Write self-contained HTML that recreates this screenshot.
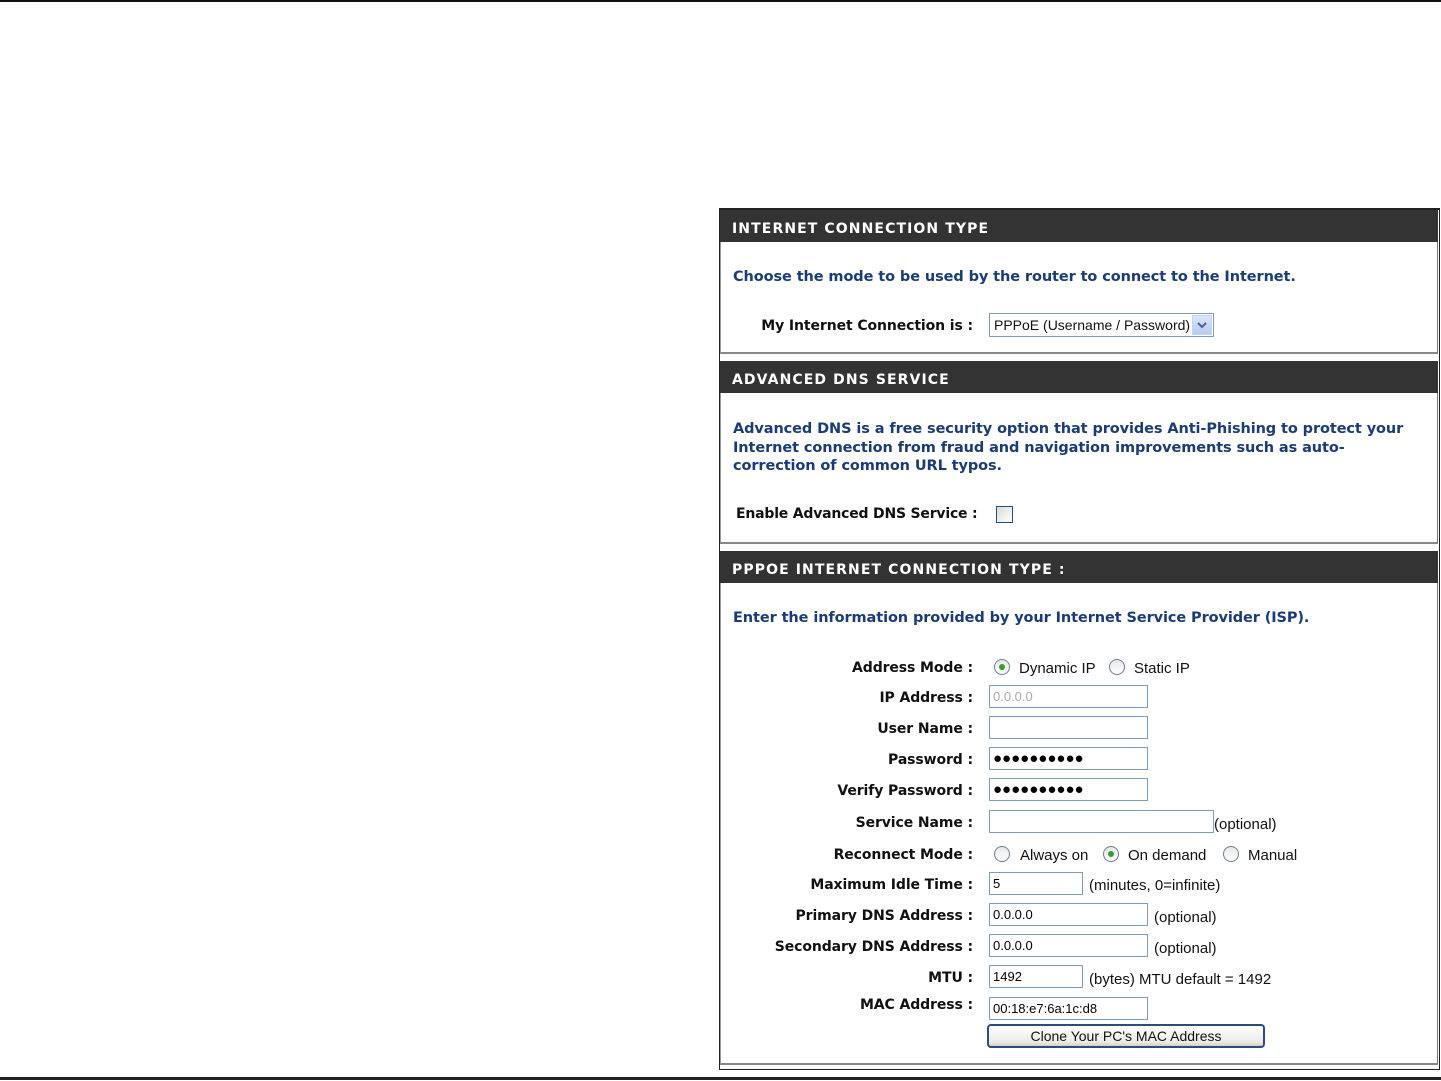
<!DOCTYPE html>
<html><head><meta charset="utf-8"><style>
*{margin:0;padding:0;box-sizing:border-box}
body{width:1441px;height:1081px;background:#fff;position:relative;overflow:hidden;font-family:"DejaVu Sans",Verdana,sans-serif}
.a{position:absolute;white-space:nowrap}
.hd{position:absolute;left:720px;width:718px;height:32px;background:#333;color:#fff;font-weight:bold;font-size:14px;letter-spacing:1.1px;padding-left:12px;padding-top:3px;line-height:32px}
.box{position:absolute;left:720px;width:718px;border-left:1px solid #999;border-right:1px solid #777;border-bottom:2px solid #888}
.blue{color:#1b3c78;font-weight:bold;font-size:14.5px;letter-spacing:-0.1px}
.lbl{position:absolute;right:468px;font-weight:bold;font-size:14px;color:#111;white-space:nowrap;letter-spacing:-0.1px}
.in{position:absolute;left:989px;width:159px;height:23px;border:1px solid #7f9db9;background:#fff;font-family:"Liberation Sans",Tahoma,sans-serif;font-size:13px;padding-left:3px;line-height:21px;color:#000}
.t{position:absolute;font-family:"Liberation Sans",Tahoma,sans-serif;font-size:15px;color:#111;white-space:nowrap}
.r{position:absolute;width:16px;height:16px;border-radius:50%;border:1px solid #6b7f95;background:linear-gradient(#e8e8e8,#fff)}
.r.on::after{content:"";position:absolute;left:4px;top:4px;width:6px;height:6px;border-radius:50%;background:#30a030}
.dots{font-size:15px;letter-spacing:0px;font-weight:bold;line-height:22px}
</style></head><body>
<div class="a" style="left:0;top:0;width:1441px;height:2px;background:#111"></div>
<div class="a" style="left:0;top:1077px;width:1441px;height:3px;background:#222"></div>

<div class="a" style="left:719px;top:208px;width:721px;height:862px;border:1px solid #222;border-top:2px solid #222"></div>

<!-- section 1 -->
<div class="hd" style="top:210px">INTERNET CONNECTION TYPE</div>
<div class="box" style="top:242px;height:112px"></div>
<div class="a blue" style="left:733px;top:269px">Choose the mode to be used by the router to connect to the Internet.</div>
<div class="lbl" style="top:318px">My Internet Connection is :</div>
<div class="a" style="left:989px;top:313px;width:225px;height:24px;border:1px solid #7f9db9;background:#fff"></div>
<div class="t" style="left:994px;top:317px;font-size:14px">PPPoE (Username / Password)</div>
<div class="a" style="left:1192px;top:315px;width:20px;height:20px;background:linear-gradient(#dbe6fb,#b6caf2);border:1px solid #c3d3f3"><svg width="18" height="18" viewBox="0 0 18 18"><path d="M5 7l4 4 4-4" stroke="#4d6185" stroke-width="2" fill="none"/></svg></div>

<!-- section 2 -->
<div class="hd" style="top:361px">ADVANCED DNS SERVICE</div>
<div class="box" style="top:393px;height:151px"></div>
<div class="a blue" style="left:733px;top:420px;line-height:18.5px;white-space:normal;width:690px">Advanced DNS is a free security option that provides Anti-Phishing to protect your Internet connection from fraud and navigation improvements such as auto-<br>correction of common URL typos.</div>
<div class="a" style="left:736px;top:506px;font-size:14px;color:#111;font-weight:600;letter-spacing:-0.2px">Enable Advanced DNS Service :</div>
<div class="a" style="left:996px;top:506px;width:17px;height:17px;border:1px solid #1c4f82;background:linear-gradient(135deg,#dcdcd5,#fff)"></div>

<!-- section 3 -->
<div class="hd" style="top:551px">PPPOE INTERNET CONNECTION TYPE :</div>
<div class="box" style="top:583px;height:482px"></div>
<div class="a blue" style="left:733px;top:610px">Enter the information provided by your Internet Service Provider (ISP).</div>

<div class="lbl" style="top:660px">Address Mode :</div>
<div class="r on" style="left:994px;top:659px"></div><div class="t" style="left:1019px;top:660px">Dynamic IP</div>
<div class="r" style="left:1109px;top:659px"></div><div class="t" style="left:1134px;top:660px">Static IP</div>

<div class="lbl" style="top:690px">IP Address :</div>
<div class="in" style="top:685px;color:#aaa">0.0.0.0</div>
<div class="lbl" style="top:721px">User Name :</div>
<div class="in" style="top:716px"></div>
<div class="lbl" style="top:752px">Password :</div>
<div class="in dots" style="top:747px">●●●●●●●●●●</div>
<div class="lbl" style="top:783px">Verify Password :</div>
<div class="in dots" style="top:778px">●●●●●●●●●●</div>
<div class="lbl" style="top:815px">Service Name :</div>
<div class="in" style="top:810px;width:225px"></div><div class="t" style="left:1214px;top:816px">(optional)</div>

<div class="lbl" style="top:847px">Reconnect Mode :</div>
<div class="r" style="left:994px;top:846px"></div><div class="t" style="left:1020px;top:847px">Always on</div>
<div class="r on" style="left:1103px;top:846px"></div><div class="t" style="left:1128px;top:847px">On demand</div>
<div class="r" style="left:1223px;top:846px"></div><div class="t" style="left:1248px;top:847px">Manual</div>

<div class="lbl" style="top:877px">Maximum Idle Time :</div>
<div class="in" style="top:872px;width:94px">5</div><div class="t" style="left:1089px;top:877px">(minutes, 0=infinite)</div>
<div class="lbl" style="top:908px">Primary DNS Address :</div>
<div class="in" style="top:903px">0.0.0.0</div><div class="t" style="left:1154px;top:909px">(optional)</div>
<div class="lbl" style="top:939px">Secondary DNS Address :</div>
<div class="in" style="top:934px">0.0.0.0</div><div class="t" style="left:1154px;top:940px">(optional)</div>
<div class="lbl" style="top:970px">MTU :</div>
<div class="in" style="top:965px;width:94px">1492</div><div class="t" style="left:1089px;top:971px">(bytes) MTU default = 1492</div>
<div class="lbl" style="top:997px">MAC Address :</div>
<div class="in" style="top:997px">00:18:e7:6a:1c:d8</div>
<div class="a" style="left:987px;top:1024px;width:278px;height:24px;border:2px solid #2a4d7e;border-radius:4px;background:linear-gradient(#fff,#ecebe6 80%,#d6d2c2);font-family:'Liberation Sans',Tahoma,sans-serif;font-size:14px;text-align:center;line-height:20px;color:#111">Clone Your PC's MAC Address</div>
</body></html>
